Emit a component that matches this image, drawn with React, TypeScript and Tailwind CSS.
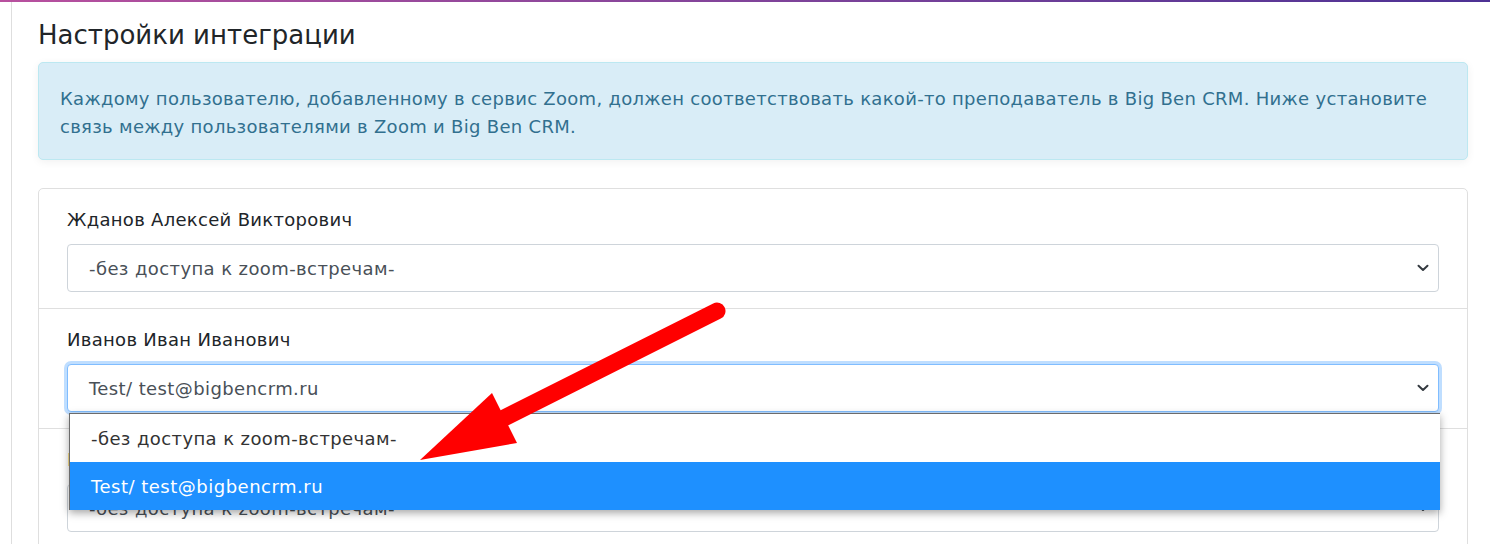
import React from 'react'

const users = [
  { name: 'Жданов Алексей Викторович', value: '-без доступа к zoom-встречам-', focused: false, labelClass: 'text-[#212529]' },
  { name: 'Иванов Иван Иванович', value: 'Test/ test@bigbencrm.ru', focused: true, labelClass: 'text-[#212529]' },
  { name: 'Петров Пётр Петрович', value: '-без доступа к zoom-встречам-', focused: false, labelClass: 'text-[#d9924a]' },
]

const options = ['-без доступа к zoom-встречам-', 'Test/ test@bigbencrm.ru']

function Chevron() {
  return (
    <svg width="12" height="8" viewBox="0 0 12 8" className="shrink-0">
      <path d="M1.5 1.8 L6 6 L10.5 1.8" fill="none" stroke="#343a40" strokeWidth="2" strokeLinecap="round" strokeLinejoin="round" />
    </svg>
  )
}

function FakeSelect({ value, focused }: { value: string; focused: boolean }) {
  return (
    <div className="relative">
      <div
        className={
          focused
            ? 'h-[48px] flex items-center justify-between pl-[21px] pr-[9px] rounded-[4px] border border-[#80bdff] bg-white text-[#495057] shadow-[0_0_0_3px_rgba(0,123,255,0.25)]'
            : 'h-[48px] flex items-center justify-between pl-[21px] pr-[9px] rounded-[4px] border border-[#ced4da] bg-white text-[#495057]'
        }
      >
        <span className="text-[18px] tracking-[0.4px]">{value}</span>
        <Chevron />
      </div>
      {focused && (
        <div className="absolute z-10 top-[calc(100%+1px)] left-[2px] right-[-1px] bg-white border-t border-l border-[#6b6b6b] shadow-[0_3px_8px_rgba(0,0,0,0.35)]">
          {options.map((o, i) => (
            <div
              key={o}
              className={
                i === 1
                  ? 'h-[48px] flex items-center pl-[21px] text-[18px] tracking-[0.5px] bg-[#1e90ff] text-white'
                  : 'h-[48px] flex items-center pl-[21px] text-[18px] tracking-[0.4px] text-[#333]'
              }
            >
              {o}
            </div>
          ))}
        </div>
      )}
    </div>
  )
}

export default function App() {
  return (
    <div className="relative w-[1490px] h-[544px] overflow-hidden bg-white font-['DejaVu_Sans',sans-serif]">
      <div className="h-[2px] bg-gradient-to-r from-[#b8509e] to-[#4d3194]" />
      <div className="ml-[11px] border-l border-[#dedede] h-[542px] pl-[26px] pr-[22px]">
        <h1 className="pt-[18px] text-[26px] leading-[31px] text-[#212529]">Настройки интеграции</h1>

        <div className="mt-[11px] rounded-[5px] border border-[#bce8f1] bg-[#d9edf7] text-[#31708f] pl-[21px] pr-[20px] pt-[22px] pb-[18px] text-[18px] tracking-[0.3px] leading-[28px] shadow-[0_2px_8px_rgba(0,0,0,0.06)]">
          Каждому пользователю, добавленному в сервис Zoom, должен соответствовать какой-то преподаватель в Big Ben CRM. Ниже установите связь между пользователями в Zoom и Big Ben CRM.
        </div>

        <div className="mt-[28px] rounded-[5px] border border-[#dfdfdf]">
          {users.map((u, i) => (
            <div key={u.name} className={i > 0 ? 'border-t border-[#dfdfdf] pt-[19px] pb-[16px] px-[28px]' : 'pt-[19px] pb-[16px] px-[28px]'}>
              <div className={'text-[18px] tracking-[0.3px] leading-[24px] mb-[12px] ' + u.labelClass}>{u.name}</div>
              <FakeSelect value={u.value} focused={u.focused} />
            </div>
          ))}
        </div>
      </div>

      {/* annotation arrow */}
      <svg className="absolute inset-0 z-20 pointer-events-none" width="1490" height="544" viewBox="0 0 1490 544">
        <line x1="717" y1="311" x2="500" y2="420" stroke="#ff0000" strokeWidth="17" strokeLinecap="round" />
        <polygon points="420,460 492,393 517,443" fill="#ff0000" />
      </svg>
    </div>
  )
}
